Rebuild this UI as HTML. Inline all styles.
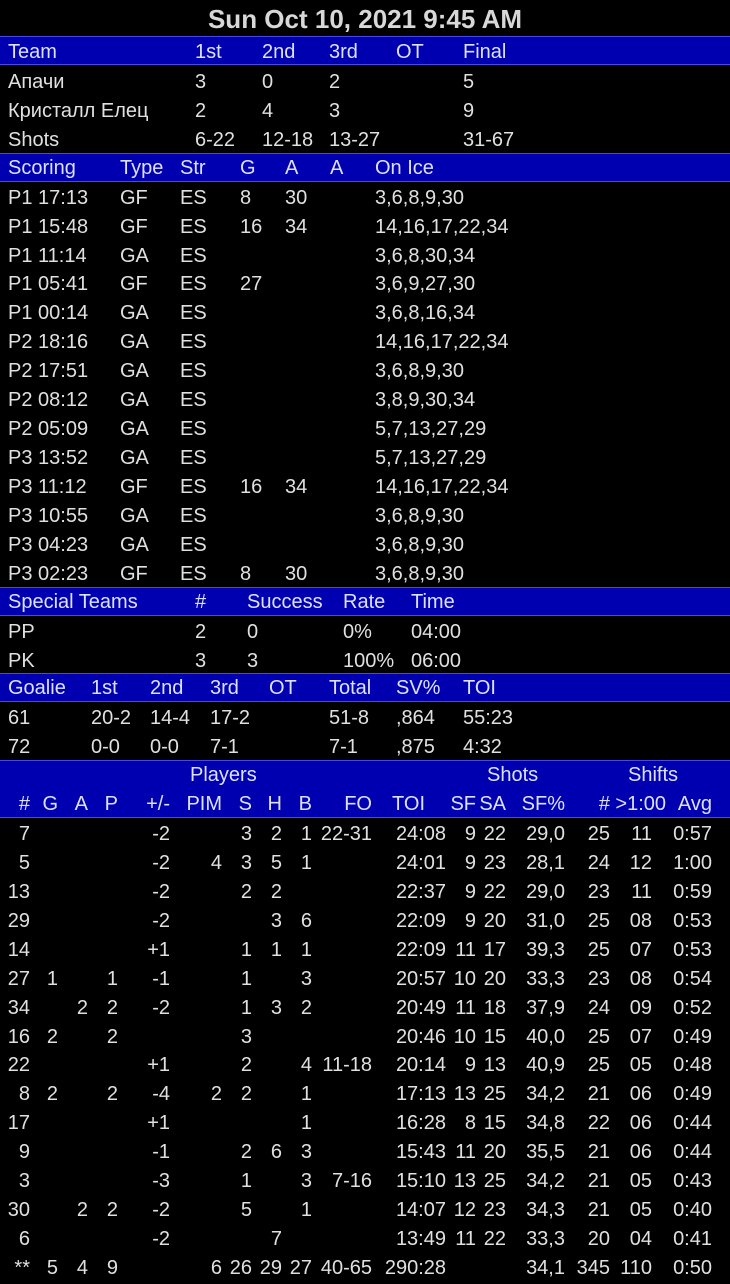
<!DOCTYPE html>
<html><head><meta charset="utf-8"><style>
body{margin:0;background:#000;width:730px;height:1280px;overflow:hidden;position:relative;font-family:"Liberation Sans","DejaVu Sans",sans-serif;font-size:20px;color:#e0e0e0}
.t{position:absolute;left:0;width:730px;top:0;height:38px;line-height:38px;text-align:center;font-weight:bold;font-size:26px;color:#d8d8d8}
.bar{position:absolute;left:0;width:730px;background:#0000b0;border-top:1px solid #4a4ae0;border-bottom:1px solid #4a4ae0;box-sizing:border-box}
.r{position:absolute;left:0;width:730px;height:29px;line-height:31px}
.r span{position:absolute;white-space:nowrap}
.h{color:#dde0ff}
</style></head><body>
<div class="t">Sun Oct 10, 2021 9:45 AM</div>
<div class="bar" style="top:36px;height:29px"></div>
<div class="bar" style="top:153px;height:29px"></div>
<div class="bar" style="top:587px;height:29px"></div>
<div class="bar" style="top:673px;height:29px"></div>
<div class="bar" style="top:760px;height:58px"></div>

<div class="r h" style="top:37px"><span style="left:8px">Team</span><span style="left:195px">1st</span><span style="left:262px">2nd</span><span style="left:329px">3rd</span><span style="left:396px">OT</span><span style="left:463px">Final</span></div>
<div class="r" style="top:67px"><span style="left:8px">Апачи</span><span style="left:195px">3</span><span style="left:262px">0</span><span style="left:329px">2</span><span style="left:463px">5</span></div>
<div class="r" style="top:96px"><span style="left:8px">Кристалл Елец</span><span style="left:195px">2</span><span style="left:262px">4</span><span style="left:329px">3</span><span style="left:463px">9</span></div>
<div class="r" style="top:125px"><span style="left:8px">Shots</span><span style="left:195px">6-22</span><span style="left:262px">12-18</span><span style="left:329px">13-27</span><span style="left:463px">31-67</span></div>

<div class="r h" style="top:153px"><span style="left:8px">Scoring</span><span style="left:120px">Type</span><span style="left:180px">Str</span><span style="left:240px">G</span><span style="left:285px">A</span><span style="left:330px">A</span><span style="left:375px">On Ice</span></div>
<div class="r" style="top:183px"><span style="left:8px">P1 17:13</span><span style="left:120px">GF</span><span style="left:180px">ES</span><span style="left:240px">8</span><span style="left:285px">30</span><span style="left:375px">3,6,8,9,30</span></div>
<div class="r" style="top:212px"><span style="left:8px">P1 15:48</span><span style="left:120px">GF</span><span style="left:180px">ES</span><span style="left:240px">16</span><span style="left:285px">34</span><span style="left:375px">14,16,17,22,34</span></div>
<div class="r" style="top:241px"><span style="left:8px">P1 11:14</span><span style="left:120px">GA</span><span style="left:180px">ES</span><span style="left:375px">3,6,8,30,34</span></div>
<div class="r" style="top:269px"><span style="left:8px">P1 05:41</span><span style="left:120px">GF</span><span style="left:180px">ES</span><span style="left:240px">27</span><span style="left:375px">3,6,9,27,30</span></div>
<div class="r" style="top:298px"><span style="left:8px">P1 00:14</span><span style="left:120px">GA</span><span style="left:180px">ES</span><span style="left:375px">3,6,8,16,34</span></div>
<div class="r" style="top:327px"><span style="left:8px">P2 18:16</span><span style="left:120px">GA</span><span style="left:180px">ES</span><span style="left:375px">14,16,17,22,34</span></div>
<div class="r" style="top:356px"><span style="left:8px">P2 17:51</span><span style="left:120px">GA</span><span style="left:180px">ES</span><span style="left:375px">3,6,8,9,30</span></div>
<div class="r" style="top:385px"><span style="left:8px">P2 08:12</span><span style="left:120px">GA</span><span style="left:180px">ES</span><span style="left:375px">3,8,9,30,34</span></div>
<div class="r" style="top:414px"><span style="left:8px">P2 05:09</span><span style="left:120px">GA</span><span style="left:180px">ES</span><span style="left:375px">5,7,13,27,29</span></div>
<div class="r" style="top:443px"><span style="left:8px">P3 13:52</span><span style="left:120px">GA</span><span style="left:180px">ES</span><span style="left:375px">5,7,13,27,29</span></div>
<div class="r" style="top:472px"><span style="left:8px">P3 11:12</span><span style="left:120px">GF</span><span style="left:180px">ES</span><span style="left:240px">16</span><span style="left:285px">34</span><span style="left:375px">14,16,17,22,34</span></div>
<div class="r" style="top:501px"><span style="left:8px">P3 10:55</span><span style="left:120px">GA</span><span style="left:180px">ES</span><span style="left:375px">3,6,8,9,30</span></div>
<div class="r" style="top:530px"><span style="left:8px">P3 04:23</span><span style="left:120px">GA</span><span style="left:180px">ES</span><span style="left:375px">3,6,8,9,30</span></div>
<div class="r" style="top:559px"><span style="left:8px">P3 02:23</span><span style="left:120px">GF</span><span style="left:180px">ES</span><span style="left:240px">8</span><span style="left:285px">30</span><span style="left:375px">3,6,8,9,30</span></div>

<div class="r h" style="top:587px"><span style="left:8px">Special Teams</span><span style="left:195px">#</span><span style="left:247px">Success</span><span style="left:343px">Rate</span><span style="left:411px">Time</span></div>
<div class="r" style="top:617px"><span style="left:8px">PP</span><span style="left:195px">2</span><span style="left:247px">0</span><span style="left:343px">0%</span><span style="left:411px">04:00</span></div>
<div class="r" style="top:646px"><span style="left:8px">PK</span><span style="left:195px">3</span><span style="left:247px">3</span><span style="left:343px">100%</span><span style="left:411px">06:00</span></div>

<div class="r h" style="top:673px"><span style="left:8px">Goalie</span><span style="left:91px">1st</span><span style="left:150px">2nd</span><span style="left:210px">3rd</span><span style="left:269px">OT</span><span style="left:329px">Total</span><span style="left:396px">SV%</span><span style="left:463px">TOI</span></div>
<div class="r" style="top:703px"><span style="left:8px">61</span><span style="left:91px">20-2</span><span style="left:150px">14-4</span><span style="left:210px">17-2</span><span style="left:329px">51-8</span><span style="left:396px">,864</span><span style="left:463px">55:23</span></div>
<div class="r" style="top:732px"><span style="left:8px">72</span><span style="left:91px">0-0</span><span style="left:150px">0-0</span><span style="left:210px">7-1</span><span style="left:329px">7-1</span><span style="left:396px">,875</span><span style="left:463px">4:32</span></div>

<style>
.p span:nth-child(1){right:700px}.p span:nth-child(2){right:672px}.p span:nth-child(3){right:642px}.p span:nth-child(4){right:612px}
.p span:nth-child(5){right:560px}.p span:nth-child(6){right:508px}.p span:nth-child(7){right:478px}.p span:nth-child(8){right:448px}
.p span:nth-child(9){right:418px}.p span:nth-child(10){right:358px}.p span:nth-child(11){right:284px}.p span:nth-child(12){right:254px}
.p span:nth-child(13){right:224px}.p span:nth-child(14){right:165px}.p span:nth-child(15){right:120px}.p span:nth-child(16){right:78px}.p span:nth-child(17){right:18px}
.p span.x{right:305px}.p span.y{right:64px}
</style>
<div class="r h" style="top:760px"><span style="left:190px">Players</span><span style="left:487px">Shots</span><span style="left:628px">Shifts</span></div>
<div class="r h p" style="top:789px"><span>#</span><span>G</span><span>A</span><span>P</span><span>+/-</span><span>PIM</span><span>S</span><span>H</span><span>B</span><span>FO</span><span class="x">TOI</span><span>SF</span><span>SA</span><span>SF%</span><span>#</span><span class="y">&gt;1:00</span><span>Avg</span></div>
<div class="r p" style="top:819px"><span>7</span><span></span><span></span><span></span><span>-2</span><span></span><span>3</span><span>2</span><span>1</span><span>22-31</span><span>24:08</span><span>9</span><span>22</span><span>29,0</span><span>25</span><span>11</span><span>0:57</span></div>
<div class="r p" style="top:848px"><span>5</span><span></span><span></span><span></span><span>-2</span><span>4</span><span>3</span><span>5</span><span>1</span><span></span><span>24:01</span><span>9</span><span>23</span><span>28,1</span><span>24</span><span>12</span><span>1:00</span></div>
<div class="r p" style="top:877px"><span>13</span><span></span><span></span><span></span><span>-2</span><span></span><span>2</span><span>2</span><span></span><span></span><span>22:37</span><span>9</span><span>22</span><span>29,0</span><span>23</span><span>11</span><span>0:59</span></div>
<div class="r p" style="top:906px"><span>29</span><span></span><span></span><span></span><span>-2</span><span></span><span></span><span>3</span><span>6</span><span></span><span>22:09</span><span>9</span><span>20</span><span>31,0</span><span>25</span><span>08</span><span>0:53</span></div>
<div class="r p" style="top:935px"><span>14</span><span></span><span></span><span></span><span>+1</span><span></span><span>1</span><span>1</span><span>1</span><span></span><span>22:09</span><span>11</span><span>17</span><span>39,3</span><span>25</span><span>07</span><span>0:53</span></div>
<div class="r p" style="top:964px"><span>27</span><span>1</span><span></span><span>1</span><span>-1</span><span></span><span>1</span><span></span><span>3</span><span></span><span>20:57</span><span>10</span><span>20</span><span>33,3</span><span>23</span><span>08</span><span>0:54</span></div>
<div class="r p" style="top:993px"><span>34</span><span></span><span>2</span><span>2</span><span>-2</span><span></span><span>1</span><span>3</span><span>2</span><span></span><span>20:49</span><span>11</span><span>18</span><span>37,9</span><span>24</span><span>09</span><span>0:52</span></div>
<div class="r p" style="top:1022px"><span>16</span><span>2</span><span></span><span>2</span><span></span><span></span><span>3</span><span></span><span></span><span></span><span>20:46</span><span>10</span><span>15</span><span>40,0</span><span>25</span><span>07</span><span>0:49</span></div>
<div class="r p" style="top:1050px"><span>22</span><span></span><span></span><span></span><span>+1</span><span></span><span>2</span><span></span><span>4</span><span>11-18</span><span>20:14</span><span>9</span><span>13</span><span>40,9</span><span>25</span><span>05</span><span>0:48</span></div>
<div class="r p" style="top:1079px"><span>8</span><span>2</span><span></span><span>2</span><span>-4</span><span>2</span><span>2</span><span></span><span>1</span><span></span><span>17:13</span><span>13</span><span>25</span><span>34,2</span><span>21</span><span>06</span><span>0:49</span></div>
<div class="r p" style="top:1108px"><span>17</span><span></span><span></span><span></span><span>+1</span><span></span><span></span><span></span><span>1</span><span></span><span>16:28</span><span>8</span><span>15</span><span>34,8</span><span>22</span><span>06</span><span>0:44</span></div>
<div class="r p" style="top:1137px"><span>9</span><span></span><span></span><span></span><span>-1</span><span></span><span>2</span><span>6</span><span>3</span><span></span><span>15:43</span><span>11</span><span>20</span><span>35,5</span><span>21</span><span>06</span><span>0:44</span></div>
<div class="r p" style="top:1166px"><span>3</span><span></span><span></span><span></span><span>-3</span><span></span><span>1</span><span></span><span>3</span><span>7-16</span><span>15:10</span><span>13</span><span>25</span><span>34,2</span><span>21</span><span>05</span><span>0:43</span></div>
<div class="r p" style="top:1195px"><span>30</span><span></span><span>2</span><span>2</span><span>-2</span><span></span><span>5</span><span></span><span>1</span><span></span><span>14:07</span><span>12</span><span>23</span><span>34,3</span><span>21</span><span>05</span><span>0:40</span></div>
<div class="r p" style="top:1224px"><span>6</span><span></span><span></span><span></span><span>-2</span><span></span><span></span><span>7</span><span></span><span></span><span>13:49</span><span>11</span><span>22</span><span>33,3</span><span>20</span><span>04</span><span>0:41</span></div>
<div class="r p" style="top:1253px"><span>**</span><span>5</span><span>4</span><span>9</span><span></span><span>6</span><span>26</span><span>29</span><span>27</span><span>40-65</span><span>290:28</span><span></span><span></span><span>34,1</span><span>345</span><span>110</span><span>0:50</span></div>
</body></html>
